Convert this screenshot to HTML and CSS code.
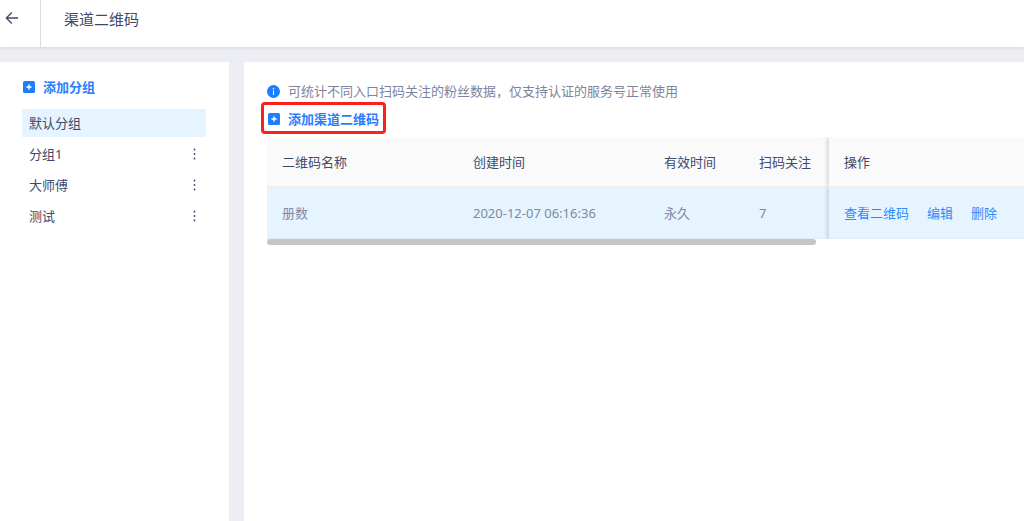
FILE: index.html
```
<!DOCTYPE html>
<html lang="zh-CN">
<head>
  <meta charset="UTF-8">
  <meta name="viewport" content="width=device-width, initial-scale=1.0">
  <title>渠道二维码</title>
  <link rel="stylesheet" href="styles.css">
</head>
<body>
  <header class="header">
    <button type="button" class="back" aria-label="返回">
      <svg width="14" height="14" viewBox="0 0 14 14" fill="none" stroke="currentColor" stroke-width="1.3"><path d="M13 7H1.5M6.8 1.5L1.3 7l5.5 5.5"/></svg>
    </button>
    <h1 class="title">渠道二维码</h1>
  </header>

  <div class="content">
    <aside class="sidebar">
      <button type="button" class="add">
        <svg class="icon" width="12" height="12" viewBox="0 0 12 12"><rect width="12" height="12" rx="1.5" fill="#1b7fff"/><path d="M6 3.4v5.2M3.4 6h5.2" stroke="#fff" stroke-width="1.5"/></svg>
        添加分组
      </button>
      <ul class="groups">
        <li class="group active"><a href="#">默认分组</a></li>
        <li class="group">
          <a href="#">分组1</a>
          <button type="button" class="more" aria-label="更多"><svg width="3" height="12" viewBox="0 0 3 12" fill="currentColor"><circle cx="1.5" cy="1.5" r="0.9"/><circle cx="1.5" cy="6" r="0.9"/><circle cx="1.5" cy="10.5" r="0.9"/></svg></button>
        </li>
        <li class="group">
          <a href="#">大师傅</a>
          <button type="button" class="more" aria-label="更多"><svg width="3" height="12" viewBox="0 0 3 12" fill="currentColor"><circle cx="1.5" cy="1.5" r="0.9"/><circle cx="1.5" cy="6" r="0.9"/><circle cx="1.5" cy="10.5" r="0.9"/></svg></button>
        </li>
        <li class="group">
          <a href="#">测试</a>
          <button type="button" class="more" aria-label="更多"><svg width="3" height="12" viewBox="0 0 3 12" fill="currentColor"><circle cx="1.5" cy="1.5" r="0.9"/><circle cx="1.5" cy="6" r="0.9"/><circle cx="1.5" cy="10.5" r="0.9"/></svg></button>
        </li>
      </ul>
    </aside>

    <main class="main">
      <p class="tip">
        <svg class="icon" width="13" height="13" viewBox="0 0 13 13"><circle cx="6.5" cy="6.5" r="6.5" fill="#1b7fff"/><circle cx="6.5" cy="3.7" r="0.8" fill="#fff"/><path d="M6.5 5.5v4.4" stroke="#fff" stroke-width="1.1"/></svg>
        可统计不同入口扫码关注的粉丝数据，仅支持认证的服务号正常使用
      </p>
      <button type="button" class="add marked">
        <svg class="icon" width="12" height="12" viewBox="0 0 12 12"><rect width="12" height="12" rx="1.5" fill="#1b7fff"/><path d="M6 3.4v5.2M3.4 6h5.2" stroke="#fff" stroke-width="1.5"/></svg>
        添加渠道二维码
      </button>

      <table class="table">
        <thead>
          <tr>
            <th class="col-name">二维码名称</th>
            <th class="col-time">创建时间</th>
            <th class="col-valid">有效时间</th>
            <th class="col-scan">扫码关注</th>
            <th class="fixed">操作</th>
          </tr>
        </thead>
        <tbody>
          <tr>
            <td>册数</td>
            <td>2020-12-07 06:16:36</td>
            <td>永久</td>
            <td>7</td>
            <td class="fixed">
              <div class="actions">
                <a href="#">查看二维码</a>
                <a href="#">编辑</a>
                <a href="#">删除</a>
              </div>
            </td>
          </tr>
        </tbody>
      </table>
      <div class="scrollbar"></div>
    </main>
  </div>
</body>
</html>
```

FILE: styles.css
```
* {
  box-sizing: border-box;
}
body {
  margin: 0;
  min-height: 100vh;
  display: flex;
  flex-direction: column;
  background: #edeef4;
  color: #42486b;
  font-family: "Noto Sans", "Noto Sans CJK SC", sans-serif;
  font-size: 13px;
  line-height: 20px;
}
button {
  padding: 0;
  border: none;
  background: none;
  color: inherit;
  font: inherit;
  cursor: pointer;
}
a {
  color: inherit;
  text-decoration: none;
}
svg {
  display: block;
  flex: none;
}

/* header */
.header {
  display: flex;
  height: 47px;
  background: #fff;
  box-shadow: 0 1px 3px rgba(40, 45, 80, 0.12);
}
.back {
  width: 41px;
  padding: 0 0 11px 5px;
  border-right: 1px solid #d9dbe5;
}
.title {
  margin: 0;
  padding: 9px 23px;
  font-size: 15px;
  font-weight: 400;
}

.content {
  flex: 1;
  display: flex;
  gap: 15px;
  padding-top: 15px;
}

/* groups */
.sidebar {
  flex: none;
  width: 229px;
  padding: 15px 23px;
  background: #fff;
}
.add {
  display: flex;
  align-items: center;
  gap: 8px;
  color: #2a7dff;
  font-weight: 700;
}
.groups {
  margin: 12px 0 0;
  padding: 0;
  list-style: none;
  display: grid;
  gap: 3px;
}
.group {
  display: flex;
  align-items: center;
  justify-content: space-between;
  height: 28px;
  margin-left: -1px;
  padding: 0 10px 0 7px;
}
.group.active {
  background: #e6f4ff;
}

/* list */
.main {
  flex: 1;
  min-width: 0;
  padding: 19px 0 0 23px;
  background: #fff;
}
.tip {
  display: flex;
  align-items: center;
  gap: 8px;
  margin: 0;
  color: #7e849e;
}
.marked {
  margin: 1px 0 0 -6px;
  padding: 4px 4px 2px;
  border: 3px solid #f9221a;
  border-radius: 4px;
}
.table {
  width: 100%;
  margin-top: 3px;
  border-spacing: 0;
  table-layout: fixed;
}
.table th,
.table td {
  padding: 0 0 0 15px;
  text-align: left;
  white-space: nowrap;
}
.table th {
  height: 50px;
  background: #fafafa;
  border-bottom: 1px solid #eceef2;
  font-weight: 400;
}
.table td {
  height: 52px;
  background: #e6f4ff;
  border-bottom: 1px solid #e3ebf2;
  color: #7e8aa3;
}
.col-name,
.col-time {
  width: 191px;
}
.col-valid {
  width: 95px;
}
.col-scan {
  width: 85px;
}
.table .fixed {
  box-shadow: -3px 0 4px -1px rgba(0, 0, 0, 0.14);
  clip-path: inset(0 0 0 -8px);
}
.actions {
  display: flex;
  gap: 18px;
  color: #2a8cff;
}
.scrollbar {
  width: 72.5%;
  height: 6px;
  border-radius: 3px;
  background: #c5c5c5;
}
```
